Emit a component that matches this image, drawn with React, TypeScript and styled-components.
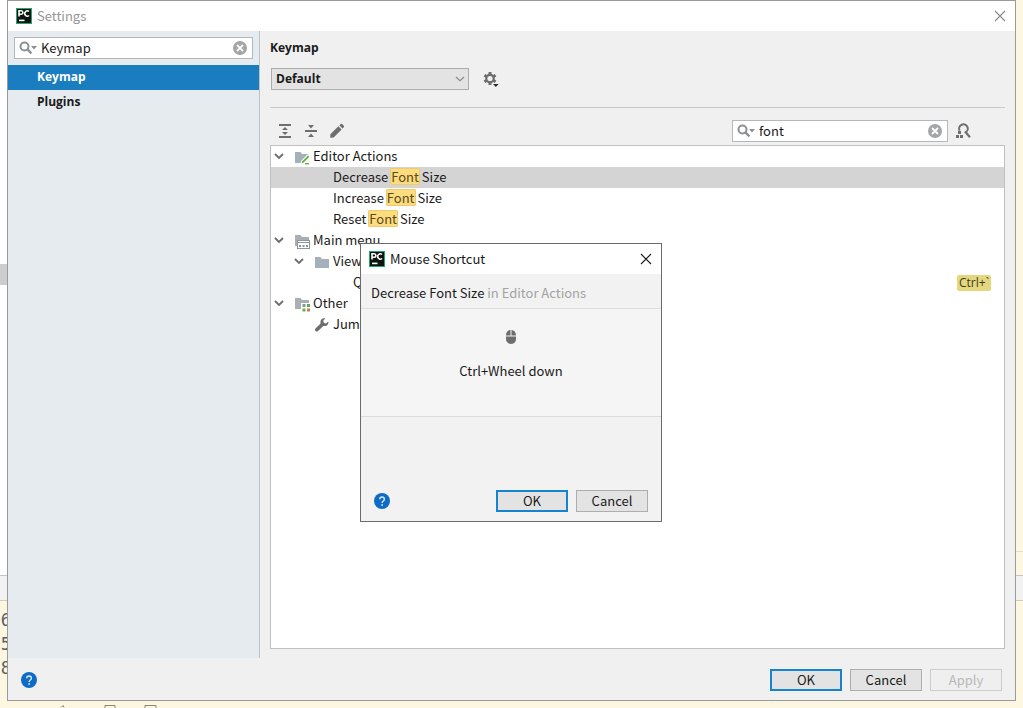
import React from "react";
import styled, { createGlobalStyle, css } from "styled-components";

const compactFont = `"Open Sans", "Noto Sans", sans-serif`;

const GlobalStyle = createGlobalStyle`
  * { box-sizing: border-box; }
  html, body { margin: 0; padding: 0; }
  body, button, input, select {
    font-family: "Noto Sans CJK SC", "Open Sans", sans-serif;
    font-size: 13px;
    line-height: 20px;
    color: #1a1a1a;
  }
  body { overflow: hidden; background: #fdf6e0; }
`;

/* ---------- desktop behind the window ---------- */

const Desktop = styled.div`
  position: relative;
  min-height: 100vh;
  padding: 0 7px 7px;
`;

const Backdrop = styled.div`
  position: absolute;
  inset: 0;
  overflow: hidden;
  display: flex;
  flex-direction: column;
`;

const EditorArea = styled.div`
  flex: 1;
  display: flex;
  justify-content: space-between;
`;

const EditorLeft = styled.div`
  width: 50%;
  padding-top: 264px;
  background: #ffffff;
`;

const ScrollThumb = styled.div`
  height: 21px;
  background: #cdcdcd;
`;

const EditorRight = styled.div`
  width: 50%;
  display: flex;
  flex-direction: column;
  justify-content: flex-end;
  padding-bottom: 23px;
  background: #fdf6e0;
`;

const EditorRule = styled.div`
  height: 1px;
  background: #e2dccb;
`;

const ToolStrip = styled.div`
  height: 26px;
  background: #f2f2f2;
  border-top: 1px solid #c4c4c4;
  border-bottom: 1px solid #d0cbbd;
`;

const Console = styled.div`
  height: 107px;
  padding-top: 7px;
  display: flex;
  flex-direction: column;
  justify-content: space-between;
  background: #fdf6e0;
`;

const ConsoleLine = styled.div`
  height: 24px;
  width: 11px;
  display: flex;
  justify-content: flex-end;
  font-family: "DejaVu Sans Mono", monospace;
  font-size: 17px;
  line-height: 24px;
  color: #55626b;
`;

const ConsoleFooter = styled.svg`
  display: block;
  margin-left: 56px;
`;

/* ---------- shared window parts ---------- */

const Window = styled.main`
  position: relative;
  height: calc(100vh - 7px);
  display: flex;
  flex-direction: column;
  border: 1px solid #9a9a9a;
  background: #f0f0f0;
`;

const TitleBar = styled.header<{ $muted?: boolean }>`
  flex: none;
  height: 30px;
  display: flex;
  align-items: center;
  gap: 5px;
  padding: 0 7px 0 8px;
  background: #ffffff;
  color: ${(p) => (p.$muted ? "#959595" : "#1a1a1a")};
`;

const TitleText = styled.h1`
  flex: 1;
  margin: 0;
  padding-bottom: 1px;
  font-size: 13px;
  font-weight: 400;
`;

const IconButton = styled.button`
  flex: none;
  display: flex;
  align-items: center;
  justify-content: center;
  min-width: 16px;
  height: 16px;
  padding: 0;
  border: 0;
  background: transparent;
`;

const PushButton = styled.button<{ $primary?: boolean }>`
  width: 72px;
  height: 22px;
  padding: 0;
  line-height: 16px;
  border: 1px solid #adadad;
  background: #e3e3e3;
  ${(p) =>
    p.$primary &&
    css`
      border: 2px solid #1583d0;
    `}
  &:disabled {
    color: #b8b8b8;
    border-color: #cccccc;
    background: #efefef;
  }
`;

const ButtonBar = styled.footer`
  flex: none;
  display: flex;
  align-items: center;
  gap: 8px;
  padding: 2px 13px 0;
`;

const Spacer = styled.div`
  flex: 1;
`;

/* ---------- search field ---------- */

const SearchBox = styled.label<{ $width?: number }>`
  display: flex;
  align-items: center;
  height: 22px;
  padding: 0 4px;
  width: ${(p) => (p.$width ? `${p.$width}px` : "auto")};
  border: 1px solid #b4b8bb;
  background: #ffffff;
`;

const SearchInput = styled.input`
  flex: 1;
  min-width: 0;
  height: 20px;
  padding: 0 4px;
  border: 0;
  outline: 0;
  background: transparent;
`;

/* ---------- settings layout ---------- */

const Body = styled.div`
  flex: 1;
  min-height: 0;
  display: flex;
`;

const Sidebar = styled.nav`
  flex: none;
  width: 252px;
  padding-top: 6px;
  border-right: 1px solid #c0c3c6;
  background: #e6ebef;
`;

const SidebarSearch = styled.div`
  padding: 0 6px 6px;
`;

const SidebarItem = styled.a<{ $active?: boolean }>`
  display: block;
  height: 25px;
  padding-left: 29px;
  font-family: ${compactFont};
  font-size: 12px;
  font-weight: 700;
  line-height: 24px;
  text-decoration: none;
  color: ${(p) => (p.$active ? "#ffffff" : "#1a1a1a")};
  background: ${(p) => (p.$active ? "#1a7dc0" : "transparent")};
`;

const Content = styled.section`
  flex: 1;
  min-width: 0;
  display: flex;
  flex-direction: column;
  padding: 6px 10px 9px;
`;

const Heading = styled.h2`
  margin: 0;
  font-family: ${compactFont};
  font-size: 12px;
  font-weight: 700;
  line-height: 22px;
`;

const SchemeRow = styled.div`
  display: flex;
  align-items: center;
  gap: 14px;
  padding: 9px 1px 17px;
  border-bottom: 1px solid #c9c9c9;
`;

const SelectWrap = styled.div`
  display: grid;
  align-items: center;
  width: 198px;
  & > * {
    grid-area: 1 / 1;
  }
  & > svg {
    justify-self: end;
    margin-right: 4px;
    pointer-events: none;
  }
`;

const Select = styled.select`
  appearance: none;
  width: 100%;
  height: 22px;
  padding: 0 4px;
  border: 1px solid #adadad;
  border-radius: 0;
  background: #e3e3e3;
  font-family: ${compactFont};
  font-size: 12px;
  font-weight: 700;
`;

const Toolbar = styled.div`
  display: flex;
  align-items: center;
  gap: 10px;
  padding: 12px 34px 3px 7px;
`;

const ToolbarSearch = styled.div`
  display: flex;
  align-items: center;
  gap: 7px;
`;

/* ---------- tree ---------- */

const Tree = styled.ul`
  flex: 1;
  min-height: 0;
  margin: 0;
  padding: 0;
  list-style: none;
  border: 1px solid #c0c0c0;
  background: #ffffff;
`;

const TreeRow = styled.li<{ $level: number; $selected?: boolean }>`
  display: flex;
  align-items: center;
  height: 21px;
  padding: 0 13px 0 ${(p) => 2 + p.$level * 20}px;
  background: ${(p) => (p.$selected ? "#d4d4d4" : "transparent")};
`;

const ArrowSlot = styled.span`
  width: 20px;
  display: flex;
  padding-left: 1px;
`;

const IconSlot = styled.span`
  width: 20px;
  display: flex;
  padding-left: 1px;
`;

const RowLabel = styled.span`
  flex: 1;
  padding-bottom: 2px;
  line-height: 19px;
  white-space: pre;
`;

const Mark = styled.mark`
  display: inline-block;
  height: 17px;
  line-height: 17px;
  padding: 0 1px;
  margin: 0 -1px;
  border-radius: 2px;
  background: #fbdc7f;
  box-shadow: inset 0 0 0 1px #eecb6c;
  color: #5a4a1c;
`;

const Shortcut = styled.kbd`
  padding: 0 2px;
  font-family: ${compactFont};
  font-size: 12px;
  line-height: 16px;
  border-radius: 2px;
  background: #e4d77e;
  color: #3d3a1c;
`;

/* ---------- mouse shortcut dialog ---------- */

const Overlay = styled.div`
  position: absolute;
  inset: 0;
  display: flex;
  justify-content: center;
  align-items: flex-start;
  padding: 242px 1px 0 0;
`;

const Dialog = styled.div`
  width: 302px;
  display: flex;
  flex-direction: column;
  border: 1px solid #6b6b6b;
  background: #f2f2f2;
`;

const DialogCaption = styled.p`
  margin: 0;
  height: 35px;
  padding: 0 10px;
  line-height: 38px;
  border-bottom: 1px solid #dcdcdc;
`;

const Faint = styled.span`
  color: #a3a3a3;
`;

const Capture = styled.div`
  height: 108px;
  padding-top: 20px;
  display: flex;
  flex-direction: column;
  align-items: center;
  gap: 16px;
  border-bottom: 1px solid #dcdcdc;
  background: #f5f5f5;
`;

const DialogButtons = styled(ButtonBar)`
  padding: 73px 13px 9px;
`;

const WindowButtons = styled(ButtonBar)`
  height: 42px;
`;

/* ---------- icons ---------- */

const AppLogo = () => (
  <svg width="16" height="16" viewBox="0 0 16 16" role="img" aria-label="PyCharm">
    <rect width="16" height="16" fill="#1fa673" />
    <rect x="1" y="1" width="14" height="14" fill="#0c1512" />
    <g fill="none" stroke="#ffffff" strokeWidth="1.6">
      <path d="M3 8.400V2.800h2.200a1.700 1.700 0 0 1 0 3.400H3" />
      <path d="M13 3.500a2.600 2.600 0 1 0 0 4" />
      <path d="M3 12.400h5.500" />
    </g>
  </svg>
);

const CloseIcon = ({ color }: { color: string }) => (
  <svg width="12" height="12" viewBox="0 0 12 12" fill="none" stroke={color} strokeWidth="1.1">
    <path d="M1 1l10 10M11 1L1 11" />
  </svg>
);

const MagnifierIcon = () => (
  <svg width="18" height="16" viewBox="0 0 18 16" fill="none">
    <circle cx="5.5" cy="6.5" r="4" stroke="#8c9093" strokeWidth="2" />
    <path d="M8.4 9.4l4 4" stroke="#8c9093" strokeWidth="2.2" />
    <path d="M12 6h6l-3 3.4z" fill="#8c9093" />
  </svg>
);

const ClearIcon = () => (
  <svg width="16" height="16" viewBox="0 0 16 16">
    <circle cx="8" cy="8" r="7" fill="#a3a6a8" />
    <path d="M5 5l6 6M11 5l-6 6" stroke="#ffffff" strokeWidth="1.8" />
  </svg>
);

const HelpIcon = () => (
  <svg width="16" height="16" viewBox="0 0 16 16">
    <circle cx="8" cy="8" r="8" fill="#0f6bc4" />
    <path d="M5.7 6.3c0-3 4.7-3 4.7 0 0 1.7-2.3 1.6-2.3 3.6" fill="none" stroke="#d6e8fa" strokeWidth="1.4" />
    <circle cx="8.1" cy="12" r="0.9" fill="#d6e8fa" />
  </svg>
);

const SelectChevron = () => (
  <svg width="10" height="6" viewBox="0 0 10 6" fill="none" stroke="#8a8a8a" strokeWidth="1.2">
    <path d="M1 1l4 3.600 4-3.600" />
  </svg>
);

const GearIcon = () => (
  <svg width="17" height="16" viewBox="0 0 17 16">
    <g stroke="#6e6e6e" strokeWidth="3">
      <path d="M7 1v13M1.400 4.200l11.200 6.600M12.600 4.200L1.400 10.800" />
    </g>
    <circle cx="7" cy="7.500" r="4.800" fill="#6e6e6e" />
    <circle cx="7" cy="7.500" r="2.600" fill="#f0f0f0" />
    <path d="M10 13h5.600l-2.800 3z" fill="#2b2b2b" />
  </svg>
);

const ExpandAllIcon = () => (
  <svg width="16" height="16" viewBox="0 0 16 16" fill="#6e6e6e">
    <path d="M2 1h12v2H2zM2 13h12v2H2zM8 4l3 3H5zM8 12l3-3H5z" />
  </svg>
);

const CollapseAllIcon = () => (
  <svg width="16" height="16" viewBox="0 0 16 16" fill="#6e6e6e">
    <path d="M2 7h12v2H2zM5 2h6L8 5.600zM5 14h6l-3-3.600z" />
  </svg>
);

const PencilIcon = () => (
  <svg width="16" height="16" viewBox="0 0 16 16" fill="#6e6e6e">
    <path d="M1.4 11.3l8-8 3.2 3.2-8 8-3.4.3zM10.4 2.4l1.3-1.3c.5-.5 1-.5 1.4 0l1.7 1.7c.5.5.5 1 0 1.4l-1.3 1.3z" />
  </svg>
);

const FindByShortcutIcon = () => (
  <svg width="16" height="16" viewBox="0 0 16 16">
    <path d="M4.600 7.600A4.300 4.300 0 1 1 10.600 9.400" fill="none" stroke="#6e6e6e" strokeWidth="2" />
    <path d="M10 8.600l5 5.600" stroke="#6e6e6e" strokeWidth="2.200" />
    <path d="M1 12h3v3H1zM5 12h3v3H5zM3 8h3v3H3z" fill="#6e6e6e" />
  </svg>
);

const ArrowIcon = () => (
  <svg width="10" height="7" viewBox="0 0 10 7" fill="none" stroke="#6c6c6c" strokeWidth="1.8">
    <path d="M1 1l4 4 4-4" />
  </svg>
);

const folderPath = "M1 3h5.4l1.6 2H15v9H1z";

const FolderIcon = () => (
  <svg width="16" height="16" viewBox="0 0 16 16">
    <path d={folderPath} fill="#a3b2ba" />
  </svg>
);

const EditorFolderIcon = () => (
  <svg width="16" height="16" viewBox="0 0 16 16">
    <path d={folderPath} fill="#a3b2ba" />
    <path d="M6 16l1-4 7-7 2 1v10z" fill="#ffffff" />
    <path d="M8 12.4l6-6 1.4 1.4-6 6-1.8.4z" fill="#62b543" />
    <path d="M11 14h4v1.4h-4z" fill="#62b543" />
  </svg>
);

const MenuFolderIcon = () => (
  <svg width="16" height="16" viewBox="0 0 16 16">
    <path d="M1 2h5.4L8 4h7v9H1z" fill="#a9afb3" />
    <rect x="3.5" y="7.5" width="12" height="8" fill="#ffffff" stroke="#8e959a" />
    <path d="M4 9.5h11" stroke="#8e959a" />
    <path d="M5 12h2v2H5zM8.500 12h2v2h-2zM12 12h2v2h-2z" fill="#8e959a" />
  </svg>
);

const OtherFolderIcon = () => (
  <svg width="16" height="16" viewBox="0 0 16 16">
    <path d="M1 2h5.400L8 4h7v9H1z" fill="#a9afb3" />
    <path d="M7 7h9v9H7z" fill="#ffffff" />
    <path d="M8.500 8h3v3h-3z" fill="#8b9499" />
    <path d="M13 8h3v3h-3z" fill="#62a85a" />
    <path d="M8.500 12.500h3v3h-3z" fill="#62b543" />
    <path d="M13 12.500h3v3h-3z" fill="#d3746a" />
  </svg>
);

const WrenchIcon = () => (
  <svg width="16" height="16" viewBox="0 0 16 16">
    <path
      d="M14.300 4.500l-2.300 1.900-2.200-.6-.5-2.200L11.400 1.400C9.100.7 6.900 2 6.500 4.200c-.2.800-.1 1.500.1 2.200L1.500 11.500c-1.500 1.600.9 4.100 2.600 2.600l5.200-5.200c3.200.9 5.700-1.400 5-4.400z"
      fill="#6e6e6e"
    />
  </svg>
);

const MouseIcon = () => (
  <svg width="12" height="16" viewBox="0 0 12 16" fill="#6e6e6e">
    <path d="M5.500 1v5.500H1C1 3 2.800 1.200 5.500 1zM6.500 1v5.500H11C11 3 9.200 1.200 6.500 1zM1 7.500h10V10c0 6.600-10 6.600-10 0z" />
  </svg>
);

/* ---------- data ---------- */

type Row = {
  level: number;
  label: React.ReactNode;
  expandable?: boolean;
  icon?: React.ReactNode;
  selected?: boolean;
  shortcut?: string;
};

const fontAction = (verb: string) => (
  <>
    {verb} <Mark>Font</Mark> Size
  </>
);

const rows: Row[] = [
  { level: 0, label: "Editor Actions", expandable: true, icon: <EditorFolderIcon /> },
  { level: 1, label: fontAction("Decrease"), selected: true },
  { level: 1, label: fontAction("Increase") },
  { level: 1, label: fontAction("Reset") },
  { level: 0, label: "Main menu", expandable: true, icon: <MenuFolderIcon /> },
  { level: 1, label: "View", expandable: true, icon: <FolderIcon /> },
  { level: 2, label: "Q", shortcut: "Ctrl+`" },
  { level: 0, label: "Other", expandable: true, icon: <OtherFolderIcon /> },
  { level: 1, label: "Jump", icon: <WrenchIcon /> },
];

/* ---------- components ---------- */

const SearchField = ({ value, label, width }: { value: string; label: string; width?: number }) => (
  <SearchBox $width={width}>
    <MagnifierIcon />
    <SearchInput type="text" defaultValue={value} aria-label={label} />
    <IconButton type="button" aria-label="Clear">
      <ClearIcon />
    </IconButton>
  </SearchBox>
);

const MouseShortcutDialog = () => (
  <Overlay>
    <Dialog role="dialog" aria-label="Mouse Shortcut">
      <TitleBar>
        <AppLogo />
        <TitleText as="h2">Mouse Shortcut</TitleText>
        <IconButton type="button" aria-label="Close dialog">
          <CloseIcon color="#1a1a1a" />
        </IconButton>
      </TitleBar>
      <DialogCaption>
        Decrease Font Size <Faint>in Editor Actions</Faint>
      </DialogCaption>
      <Capture>
        <MouseIcon />
        <span>Ctrl+Wheel down</span>
      </Capture>
      <DialogButtons>
        <IconButton type="button" aria-label="Help">
          <HelpIcon />
        </IconButton>
        <Spacer />
        <PushButton type="button" $primary>OK</PushButton>
        <PushButton type="button">Cancel</PushButton>
      </DialogButtons>
    </Dialog>
  </Overlay>
);

export default function App() {
  return (
    <Desktop>
      <GlobalStyle />
      <Backdrop aria-hidden="true">
        <EditorArea>
          <EditorLeft>
            <ScrollThumb />
          </EditorLeft>
          <EditorRight>
            <EditorRule />
          </EditorRight>
        </EditorArea>
        <ToolStrip />
        <Console>
          <div>
            <ConsoleLine>06</ConsoleLine>
            <ConsoleLine>5</ConsoleLine>
            <ConsoleLine>8</ConsoleLine>
          </div>
          <ConsoleFooter width="104" height="3" viewBox="0 0 104 3" fill="none" stroke="#8a8574">
            <path d="M5 2.500l2-2 1 2M49 3V.5h10V3M89 3V.5h11V3" />
          </ConsoleFooter>
        </Console>
      </Backdrop>

      <Window>
        <TitleBar $muted>
          <AppLogo />
          <TitleText>Settings</TitleText>
          <IconButton type="button" aria-label="Close">
            <CloseIcon color="#8a8a8a" />
          </IconButton>
        </TitleBar>
        <Body>
          <Sidebar>
            <SidebarSearch>
              <SearchField value="Keymap" label="Search settings" />
            </SidebarSearch>
            <SidebarItem href="#keymap" $active>Keymap</SidebarItem>
            <SidebarItem href="#plugins">Plugins</SidebarItem>
          </Sidebar>
          <Content>
            <Heading>Keymap</Heading>
            <SchemeRow>
              <SelectWrap>
                <Select aria-label="Keymap scheme" defaultValue="Default">
                  <option>Default</option>
                </Select>
                <SelectChevron />
              </SelectWrap>
              <IconButton type="button" aria-label="Scheme actions">
                <GearIcon />
              </IconButton>
            </SchemeRow>
            <Toolbar>
              <IconButton type="button" aria-label="Expand all">
                <ExpandAllIcon />
              </IconButton>
              <IconButton type="button" aria-label="Collapse all">
                <CollapseAllIcon />
              </IconButton>
              <IconButton type="button" aria-label="Edit shortcut">
                <PencilIcon />
              </IconButton>
              <Spacer />
              <ToolbarSearch>
                <SearchField value="font" label="Search actions" width={216} />
                <IconButton type="button" aria-label="Find by shortcut">
                  <FindByShortcutIcon />
                </IconButton>
              </ToolbarSearch>
            </Toolbar>
            <Tree>
              {rows.map((row, i) => (
                <TreeRow key={i} $level={row.level} $selected={row.selected}>
                  <ArrowSlot>{row.expandable && <ArrowIcon />}</ArrowSlot>
                  <IconSlot>{row.icon}</IconSlot>
                  <RowLabel>{row.label}</RowLabel>
                  {row.shortcut && <Shortcut>{row.shortcut}</Shortcut>}
                </TreeRow>
              ))}
            </Tree>
          </Content>
        </Body>
        <WindowButtons>
          <IconButton type="button" aria-label="Help">
            <HelpIcon />
          </IconButton>
          <Spacer />
          <PushButton type="button" $primary>OK</PushButton>
          <PushButton type="button">Cancel</PushButton>
          <PushButton type="button" disabled>Apply</PushButton>
        </WindowButtons>
        <MouseShortcutDialog />
      </Window>
    </Desktop>
  );
}
